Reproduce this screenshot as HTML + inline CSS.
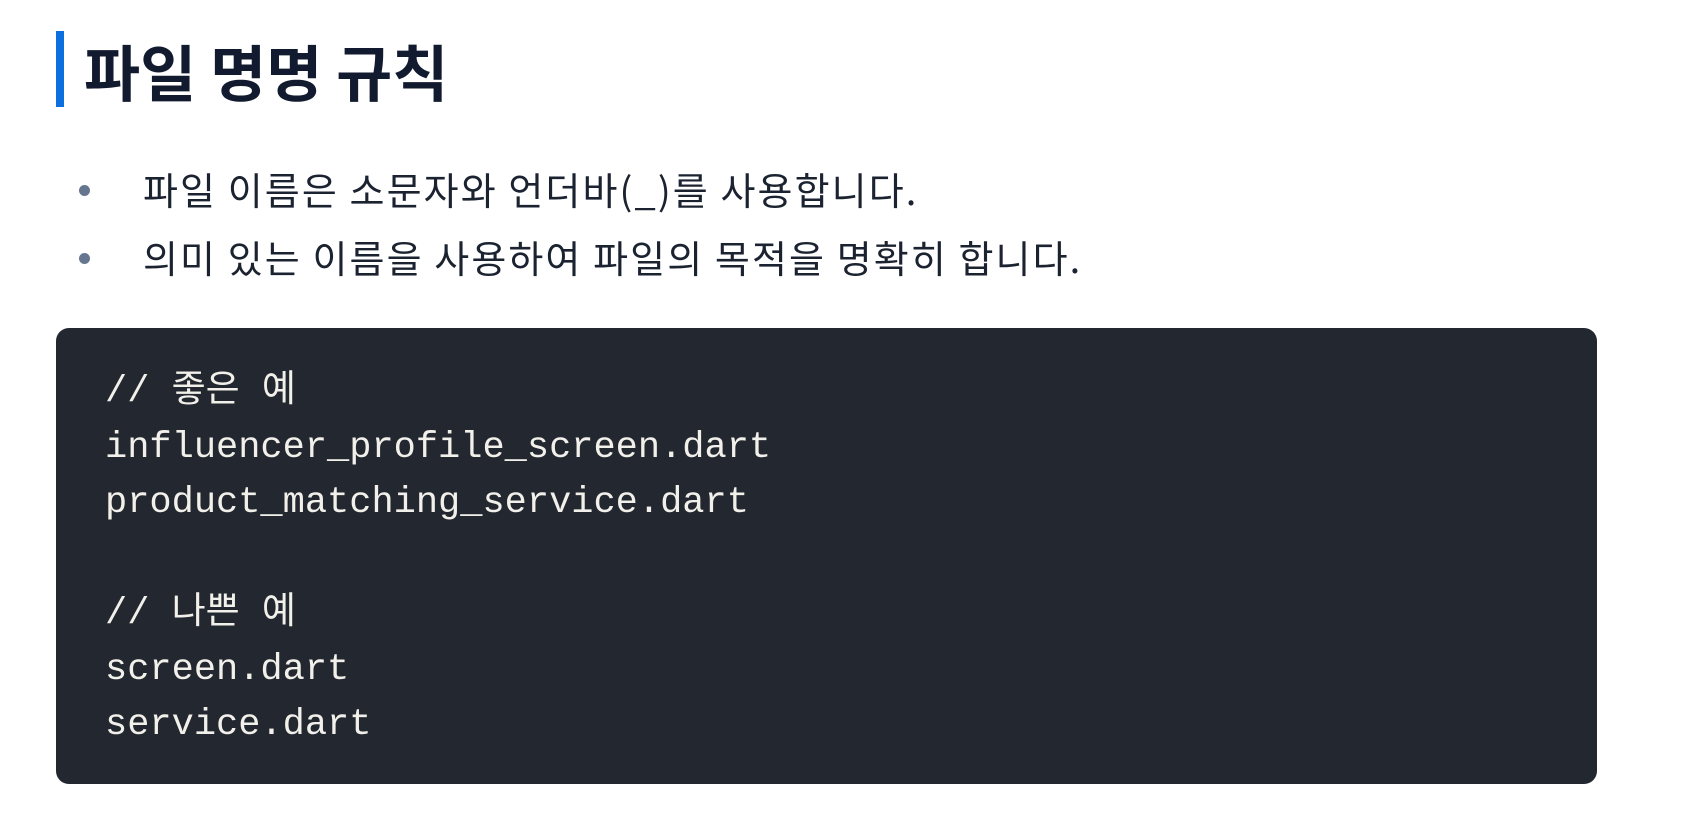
<!DOCTYPE html>
<html><head><meta charset="utf-8"><style>
html,body{margin:0;padding:0;background:#fff;width:1698px;height:826px;overflow:hidden}
body{font-family:"Liberation Sans","Noto Sans CJK KR",sans-serif;position:relative}
.bar{position:absolute;left:56px;top:31px;width:8px;height:76px;background:#0b6fe0}
h1{position:absolute;left:84px;top:22px;margin:0;font-size:61px;line-height:96px;font-weight:700;color:#111a2e;font-family:"Noto Sans CJK KR",sans-serif}
.li{position:absolute;left:143px;font-size:38px;letter-spacing:2.1px;line-height:50px;color:#1b2230;font-family:"Noto Sans CJK KR",sans-serif}
.dot{position:absolute;left:79px;width:11px;height:11px;border-radius:50%;background:#66768f}
.code{position:absolute;left:56px;top:328px;width:1541px;height:456px;background:#23272f;border-radius:13px}
pre{margin:0;position:absolute;left:105px;top:365px;font-family:"Liberation Mono","Noto Sans CJK KR",monospace;font-size:37px;line-height:55.5px;color:#f2f0ea}
</style></head><body>
<div class="bar"></div>
<h1>파일 명명 규칙</h1>
<div class="dot" style="top:185px"></div><div class="li" style="top:164px">파일 이름은 소문자와 언더바(_)를 사용합니다.</div>
<div class="dot" style="top:253px"></div><div class="li" style="top:232px">의미 있는 이름을 사용하여 파일의 목적을 명확히 합니다.</div>
<div class="code"></div>
<pre>// 좋은 예
influencer_profile_screen.dart
product_matching_service.dart

// 나쁜 예
screen.dart
service.dart</pre>
</body></html>
